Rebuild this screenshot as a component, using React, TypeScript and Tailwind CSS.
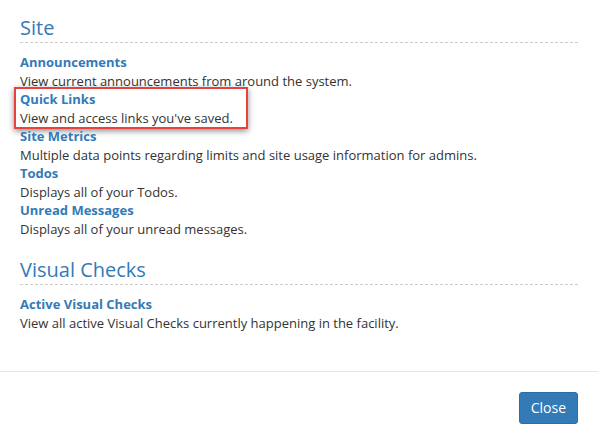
import React from "react";

const sections = [
  {
    title: "Site",
    items: [
      { name: "Announcements", desc: "View current announcements from around the system." },
      { name: "Quick Links", desc: "View and access links you've saved.", marked: true },
      { name: "Site Metrics", desc: "Multiple data points regarding limits and site usage information for admins." },
      { name: "Todos", desc: "Displays all of your Todos." },
      { name: "Unread Messages", desc: "Displays all of your unread messages." },
    ],
  },
  {
    title: "Visual Checks",
    items: [
      { name: "Active Visual Checks", desc: "View all active Visual Checks currently happening in the facility." },
    ],
  },
];

const App = () => {
  return (
    <div
      className="w-[598px] h-[443px] bg-white flex flex-col text-[#333] text-[13px] leading-[18.5px]"
      style={{ fontFamily: '"Open Sans", sans-serif' }}
    >
      <section className="px-5 pt-4 flex flex-col gap-5 h-[371px] shrink-0">
        {sections.map((section) => (
          <div key={section.title}>
            <h2 className="text-[20px] leading-[24px] text-[#337ab7] border-b border-dashed border-[#ccc] pb-[2px] mb-[10px]">
              {section.title}
            </h2>
            <div className="flex flex-col">
              {section.items.map((item) => (
                <div key={item.name} className="relative">
                  <div className="font-bold text-[#337ab7]">{item.name}</div>
                  <div>{item.desc}</div>
                  {item.marked && (
                    <div className="absolute -left-[6px] -top-[3px] w-[234px] h-[42px] border-2 border-[#e8413f] shadow-[0_2px_6px_rgba(0,0,0,0.45)] pointer-events-none" />
                  )}
                </div>
              ))}
            </div>
          </div>
        ))}
      </section>
      <footer className="border-t border-[#e5e5e5] flex justify-end px-5 pt-5">
        <button className="bg-[#337ab7] border border-[#2e6da4] text-white text-[14px] leading-[20px] px-[11px] py-[5px] rounded-[3px]">
          Close
        </button>
      </footer>
    </div>
  );
};

export default App;
